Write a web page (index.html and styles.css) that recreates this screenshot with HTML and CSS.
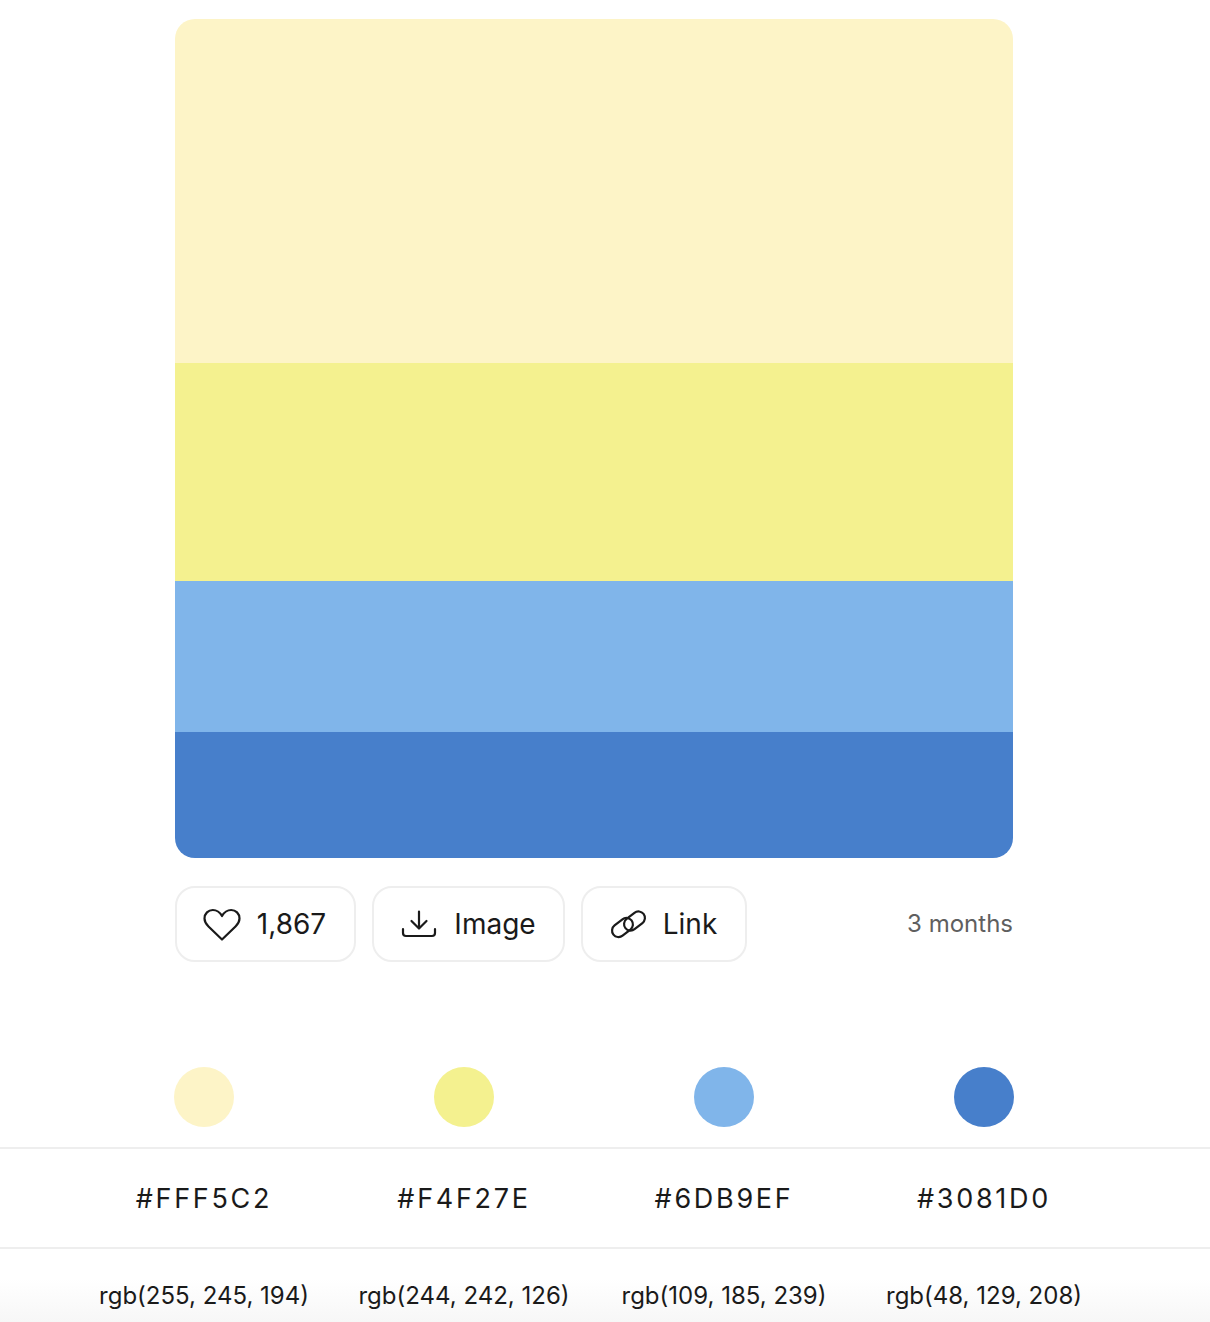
FILE: index.html
```html
<!DOCTYPE html>
<html lang="en">
<head>
  <meta charset="UTF-8" />
  <title>Palette</title>
  <link rel="stylesheet" href="styles.css">
</head>
<body>
  <main class="card">
    <div class="palette">
      <div class="stripe stripe-1"></div>
      <div class="stripe stripe-2"></div>
      <div class="stripe stripe-3"></div>
      <div class="stripe stripe-4"></div>
    </div>
    <div class="actions">
      <button class="btn btn-like" type="button">
        <svg class="icon" width="40" height="36" viewBox="0 0 40 36" fill="none" stroke="#1a1a1a" stroke-width="2.2" stroke-linejoin="round"><path d="M20 33.5 L6.5 20.5 C3.6 17.6 2.5 15.5 2.5 12.5 C2.5 7.5 6.3 4 10.8 4 C14.6 4 17.8 6.2 20 10 C22.2 6.2 25.4 4 29.2 4 C33.7 4 37.5 7.5 37.5 12.5 C37.5 15.5 36.4 17.6 33.5 20.5 Z"/></svg>
        <span>1,867</span>
      </button>
      <button class="btn btn-image" type="button">
        <svg class="icon" width="36" height="28" viewBox="0 0 36 28" fill="none" stroke="#1a1a1a" stroke-width="2.2" stroke-linecap="round" stroke-linejoin="round"><path d="M18 1.5 V18 M10.5 11 L18 18.5 L25.5 11"/><path d="M2 19 V23 C2 25 3 26 5 26 H31 C33 26 34 25 34 23 V19"/></svg>
        <span>Image</span>
      </button>
      <button class="btn btn-link" type="button">
        <svg class="icon" width="38" height="30" viewBox="0 0 38 30" fill="none" stroke="#1a1a1a" stroke-width="2.2"><rect x="2" y="12" width="23" height="13" rx="6.5" transform="rotate(-38 13.5 18.5)"/><rect x="14" y="5.5" width="23" height="13" rx="6.5" transform="rotate(-38 25.5 12)"/></svg>
        <span>Link</span>
      </button>
      <span class="age">3 months</span>
    </div>
  </main>

  <section class="codes">
    <div class="row row-dots">
      <div class="cell"><span class="dot stripe-1"></span></div>
      <div class="cell"><span class="dot stripe-2"></span></div>
      <div class="cell"><span class="dot stripe-3"></span></div>
      <div class="cell"><span class="dot stripe-4"></span></div>
    </div>
    <div class="row row-hex">
      <div class="cell">#FFF5C2</div>
      <div class="cell">#F4F27E</div>
      <div class="cell">#6DB9EF</div>
      <div class="cell">#3081D0</div>
    </div>
    <div class="row row-rgb">
      <div class="cell">rgb(255, 245, 194)</div>
      <div class="cell">rgb(244, 242, 126)</div>
      <div class="cell">rgb(109, 185, 239)</div>
      <div class="cell">rgb(48, 129, 208)</div>
    </div>
  </section>
</body>
</html>
```

FILE: styles.css
```css
html, body {
  margin: 0;
  height: 1322px;
  overflow: hidden;
}
body {
  font-family: Inter, "Liberation Sans", sans-serif;
  background: #fff;
  color: #1a1a1a;
}
.card {
  width: 838px;
  margin-left: 175px;
  padding-top: 19px;
}
.palette {
  height: 839px;
  border-radius: 20px;
  overflow: hidden;
  display: flex;
  flex-direction: column;
}
.stripe-1 { background: #fdf4c7; }
.stripe-2 { background: #f4f18f; }
.stripe-3 { background: #80b5ea; }
.stripe-4 { background: #477fcb; }
.palette .stripe-1 { height: 344px; }
.palette .stripe-2 { height: 218px; }
.palette .stripe-3 { height: 151px; }
.palette .stripe-4 { height: 126px; }

.actions {
  display: flex;
  align-items: center;
  gap: 16px;
  margin-top: 28px;
}
.btn {
  display: flex;
  align-items: center;
  justify-content: center;
  height: 76px;
  padding: 0;
  background: #fff;
  border: 2px solid #eee;
  border-radius: 20px;
  font-family: inherit;
  font-size: 28px;
  color: #1a1a1a;
}
.btn-like { width: 181px; gap: 15px; padding-right: 3px; }
.btn-image { width: 193px; gap: 17px; }
.btn-link { width: 166px; gap: 16px; padding-right: 2px; }
.age {
  margin-left: auto;
  margin-bottom: 2px;
  font-size: 24px;
  color: #5f5f5f;
}

.codes {
  margin-top: 105px;
}
.row {
  display: grid;
  grid-template-columns: repeat(4, 260px);
  padding-left: 74px;
}
.cell {
  display: flex;
  justify-content: center;
  align-items: center;
}
.dot {
  width: 60px;
  height: 60px;
  border-radius: 50%;
}
.row-dots {
  height: 80px;
  align-items: start;
  border-bottom: 2px solid #eee;
}
.row-hex {
  height: 98px;
  align-items: center;
  border-bottom: 2px solid #eee;
  font-size: 27px;
  letter-spacing: 2.7px;
}
.row-rgb {
  height: 92px;
  background: linear-gradient(#fff 30px, #f7f7f7 73px);
  align-items: center;
  font-size: 24px;
}
```
